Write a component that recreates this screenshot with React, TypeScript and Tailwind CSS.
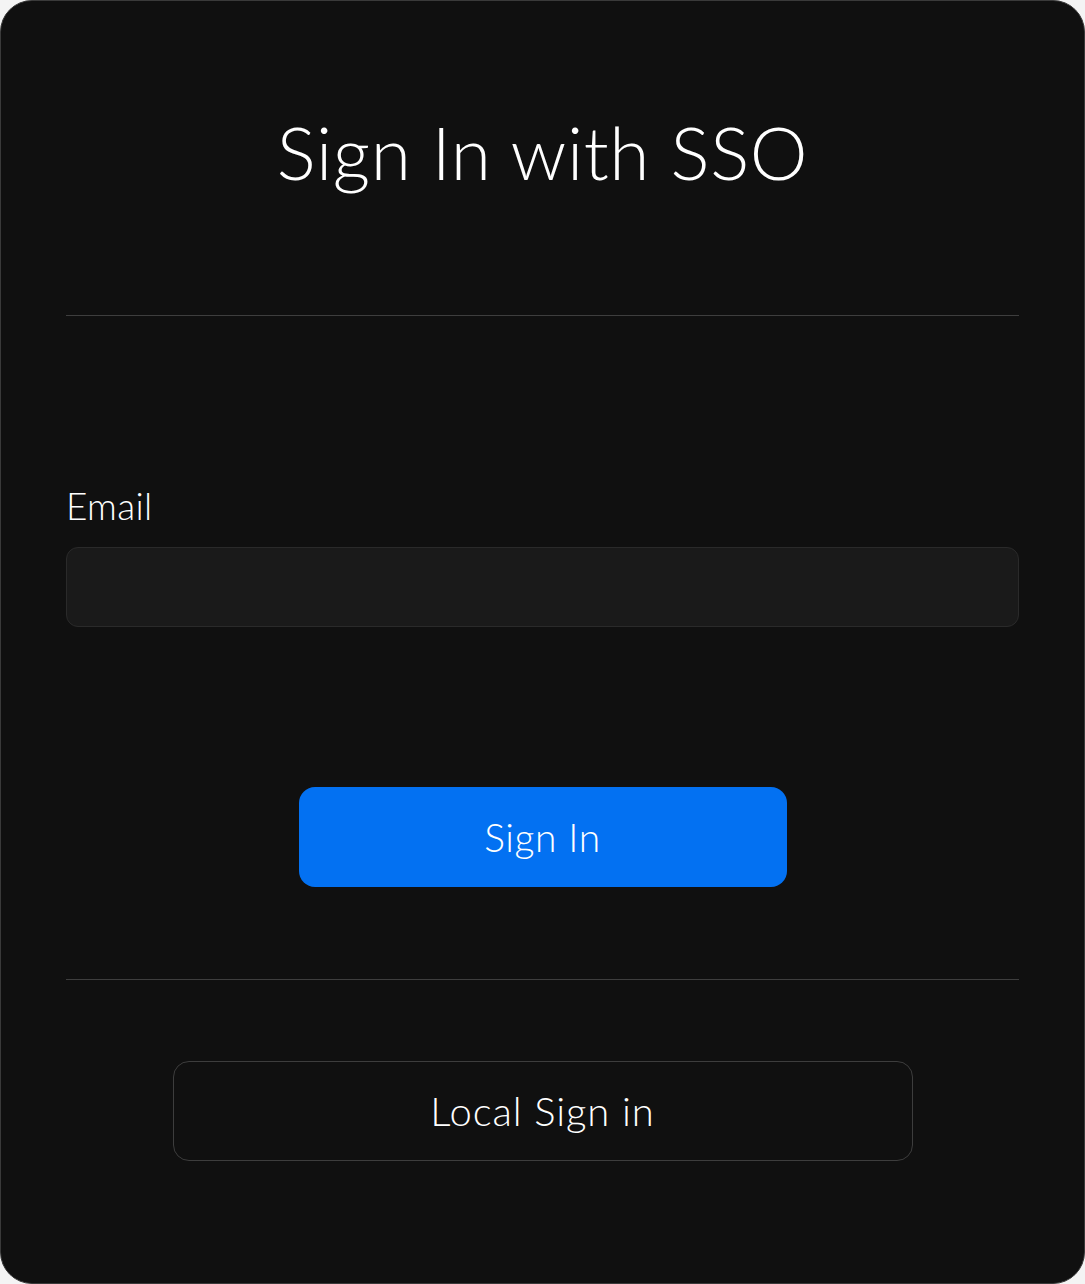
export default function App() {
  return (
    <div className="w-[1085px] h-[1284px] bg-[#f4f4f4]" style={{ fontFamily: 'Lato, "Noto Sans", sans-serif' }}>
      <div className="w-[1085px] h-[1284px] rounded-[32px] border border-[#3a3a3a] bg-[#101010] flex flex-col px-[65px] text-white font-light">
        <div className="h-[314px] pt-[108px]">
          <h1 className="text-center text-[73px] leading-[86px] font-light tracking-[0.6px]">Sign In with SSO</h1>
        </div>
        <div className="h-px bg-[#3e3e3e]" />
        <div className="pt-[168px] flex flex-col">
          <label htmlFor="email" className="text-[37px] leading-[44px] font-light tracking-[0.3px]">Email</label>
          <input
            id="email"
            type="email"
            className="mt-[19px] h-[80px] w-full rounded-[12px] border border-[#2a2a2a] bg-[#1a1a1a] px-5 text-[30px] text-white outline-none"
          />
          <div className="mt-[160px] flex justify-center">
            <button className="w-[488px] h-[100px] rounded-[16px] bg-[#0371f2] text-[39px] font-light tracking-[0.6px] text-white">
              Sign In
            </button>
          </div>
        </div>
        <div className="mt-[92px] h-px bg-[#3e3e3e]" />
        <div className="mt-[81px] flex justify-center">
          <button className="w-[740px] h-[100px] rounded-[16px] border border-[#3d3d3d] bg-[#101010] text-[40px] font-light tracking-[0.9px] text-white">
            Local Sign in
          </button>
        </div>
      </div>
    </div>
  );
}
